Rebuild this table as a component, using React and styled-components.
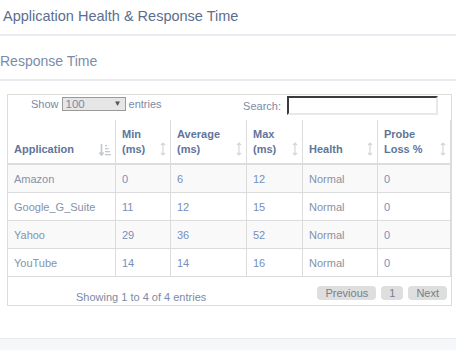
import React from 'react'
import styled, { createGlobalStyle } from 'styled-components'

const rows = [
  { app: 'Amazon', min: 0, avg: 6, max: 12, health: 'Normal', loss: 0 },
  { app: 'Google_G_Suite', min: 11, avg: 12, max: 15, health: 'Normal', loss: 0 },
  { app: 'Yahoo', min: 29, avg: 36, max: 52, health: 'Normal', loss: 0 },
  { app: 'YouTube', min: 14, avg: 14, max: 16, health: 'Normal', loss: 0 },
]

const columns = [
  { label: 'Application', width: 108, sorted: true },
  { label: ['Min', '(ms)'], width: 55 },
  { label: ['Average', '(ms)'], width: 76 },
  { label: ['Max', '(ms)'], width: 56 },
  { label: 'Health', width: 75 },
  { label: ['Probe', 'Loss %'], width: 73 },
]

function SortBoth() {
  return (
    <svg width="6" height="14" viewBox="0 0 6 14">
      <path d="M3 1 L3 13 M1 3 L3 1 L5 3 M1 11 L3 13 L5 11" stroke="#d6d6d6" strokeWidth="1.2" fill="none" />
    </svg>
  )
}

function SortAsc() {
  return (
    <svg width="12" height="13" viewBox="0 0 12 13">
      <path d="M2.5 1 L2.5 12 M0.5 9.5 L2.5 12 L4.5 9.5" stroke="#c2c8d2" strokeWidth="1.6" fill="none" />
      <rect x="6" y="2" width="2" height="1.3" fill="#c2c8d2" />
      <rect x="6" y="5" width="3.5" height="1.3" fill="#c2c8d2" />
      <rect x="6" y="8" width="5" height="1.3" fill="#c2c8d2" />
      <rect x="6" y="11" width="6" height="1.3" fill="#c2c8d2" />
    </svg>
  )
}

function App() {
  return (
    <>
      <GlobalStyle />
      <Page>
        <Title>Application Health &amp; Response Time</Title>
        <SubTitle>Response Time</SubTitle>
        <Panel>
          <TableBox>
            <Controls>
              <Length>
                Show
                <FakeSelect>
                  <span>100</span>
                  <Arrow>▼</Arrow>
                </FakeSelect>
                entries
              </Length>
              <SearchLabel>
                Search:
                <SearchInput type="text" />
              </SearchLabel>
            </Controls>
            <Table>
              <colgroup>
                {columns.map((c, i) => (
                  <col key={i} style={{ width: c.width }} />
                ))}
              </colgroup>
              <thead>
                <tr>
                  {columns.map((c, i) => (
                    <Th key={i}>
                      <HeadInner>
                        <span>
                          {Array.isArray(c.label) ? (
                            <>
                              {c.label[0]}
                              <br />
                              {c.label[1]}
                            </>
                          ) : (
                            c.label
                          )}
                        </span>
                        <SortIcon>{c.sorted ? <SortAsc /> : <SortBoth />}</SortIcon>
                      </HeadInner>
                    </Th>
                  ))}
                </tr>
              </thead>
              <tbody>
                {rows.map((r, i) => (
                  <Tr key={r.app} $striped={i % 2 === 0}>
                    <Td>{r.app}</Td>
                    <Td $num>{r.min}</Td>
                    <Td $num>{r.avg}</Td>
                    <Td $num>{r.max}</Td>
                    <Td>{r.health}</Td>
                    <Td $num>{r.loss}</Td>
                  </Tr>
                ))}
              </tbody>
            </Table>
            <Footer>
              <Info>Showing 1 to 4 of 4 entries</Info>
              <Pager>
                <PageButton>Previous</PageButton>
                <PageButton>1</PageButton>
                <PageButton>Next</PageButton>
              </Pager>
            </Footer>
          </TableBox>
        </Panel>
        <BottomBar />
      </Page>
    </>
  )
}

const GlobalStyle = createGlobalStyle`
  body {
    margin: 0;
    background: #fff;
    font-family: "Liberation Sans", Arial, sans-serif;
  }
`

const Page = styled.div`
  width: 456px;
  height: 350px;
  overflow: hidden;
  display: flex;
  flex-direction: column;
`

const Title = styled.h2`
  margin: 0;
  height: 34px;
  padding: 0 0 0 3px;
  line-height: 32px;
  font-size: 14.5px;
  font-weight: normal;
  color: #5b6e8f;
  border-bottom: 2px solid #e8ebef;
`

const SubTitle = styled.h3`
  margin: 0;
  height: 43px;
  line-height: 50px;
  font-size: 14px;
  font-weight: normal;
  color: #7b8cab;
  border-bottom: 2px solid #e8ebef;
`

const Panel = styled.div`
  padding: 13px 5px 0 7px;
  height: 244px;
`

const TableBox = styled.div`
  border: 1px solid #dcdcdc;
  width: 443px;
`

const Controls = styled.div`
  display: flex;
  justify-content: space-between;
  align-items: flex-start;
  height: 25px;
  font-size: 11px;
  color: #7b8aa6;
`

const Length = styled.label`
  display: flex;
  align-items: center;
  gap: 3px;
  padding: 2px 0 0 23px;
`

const FakeSelect = styled.div`
  display: flex;
  justify-content: space-between;
  align-items: center;
  width: 56px;
  height: 12px;
  padding: 0 3px;
  border: 1px solid #9a9a9a;
  background: #e6e6e6;
  color: #7b8aa6;
  font-size: 11.5px;
  line-height: 12px;
`

const Arrow = styled.span`
  font-size: 8px;
  color: #555;
`

const SearchLabel = styled.label`
  display: flex;
  align-items: center;
  gap: 6px;
  padding: 1px 13px 0 0;
`

const SearchInput = styled.input`
  width: 147px;
  height: 15px;
  padding: 0;
  margin: 0;
  border: 2px inset #e8e8e8;
  border-top-color: #8f8f8f;
  border-left-color: #8f8f8f;
  outline: none;
`

const Table = styled.table`
  border-collapse: collapse;
  table-layout: fixed;
  width: 443px;
  margin-left: -1px;
  font-size: 11px;
`

const Th = styled.th`
  height: 37px;
  padding: 0 4px 6px 6px;
  text-align: left;
  vertical-align: bottom;
  font-weight: bold;
  line-height: 15px;
  color: #61759a;
  border: 1px solid #dcdcdc;
  border-bottom: 2px solid #dcdcdc;
  border-top: none;
`

const HeadInner = styled.div`
  display: flex;
  justify-content: space-between;
  align-items: flex-end;
`

const SortIcon = styled.span`
  display: flex;
  padding-bottom: 1px;
`

const Tr = styled.tr`
  background: ${p => (p.$striped ? '#f9f9f9' : '#fff')};
`

const Td = styled.td`
  height: 27px;
  padding: 0 6px;
  border: 1px solid #dcdcdc;
  color: ${p => (p.$num ? '#7590bb' : '#8592a8')};
`

const Footer = styled.div`
  display: flex;
  justify-content: space-between;
  align-items: flex-start;
  height: 28px;
  font-size: 11px;
`

const Info = styled.div`
  padding: 14px 0 0 68px;
  color: #7b8aa6;
`

const Pager = styled.div`
  display: flex;
  gap: 5px;
  padding: 9px 4px 0 0;
`

const PageButton = styled.span`
  display: block;
  padding: 0 8px;
  height: 14px;
  line-height: 14px;
  border-radius: 4px;
  background: #dedede;
  color: #757f8c;
  font-size: 11px;
`

const BottomBar = styled.div`
  margin-top: auto;
  height: 11px;
  background: #f6f7f9;
  border-top: 1px solid #e8ebef;
`

export default App
